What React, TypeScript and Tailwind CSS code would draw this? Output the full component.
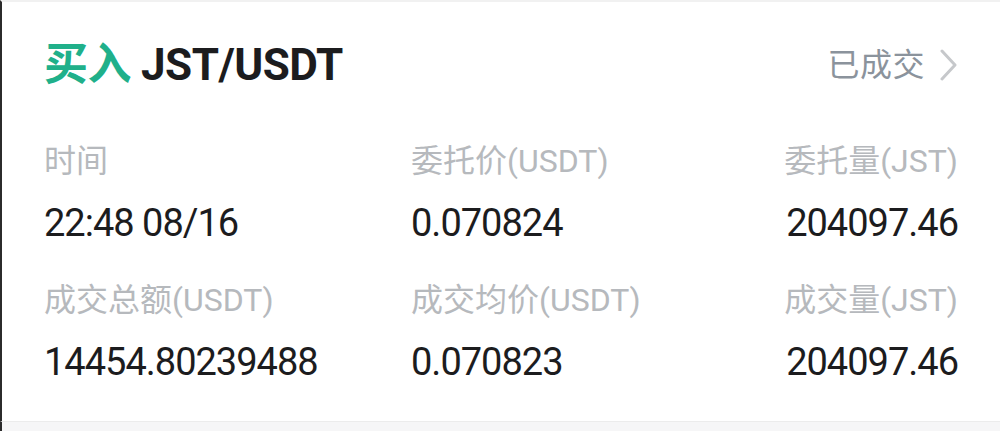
const labelFont = "font-['Roboto','Noto_Sans_CJK_SC',sans-serif]";

const cells = [
  { label: '时间', value: '22:48 08/16', align: 'left' },
  { label: '委托价(USDT)', value: '0.070824', align: 'left' },
  { label: '委托量(JST)', value: '204097.46', align: 'right' },
  { label: '成交总额(USDT)', value: '14454.80239488', align: 'left' },
  { label: '成交均价(USDT)', value: '0.070823', align: 'left' },
  { label: '成交量(JST)', value: '204097.46', align: 'right' },
];

export default function App() {
  return (
    <div className={`flex h-[431px] w-full flex-col bg-white ${labelFont}`}>
      <div className="border-l-2 border-t-2 border-l-[#2b2b2b] border-t-[#f1f1f1] pl-[42px] pr-[42px] pt-[41px] pb-[37px]">
        {/* header */}
        <div className="flex h-[44px] items-center justify-between">
          <div className="flex items-center text-[44px] font-bold leading-[44px] tracking-[-0.5px]">
            <span className="text-[#20b08a]">买入</span>
            <span className="ml-[10px] text-[#1c1c1e]">JST/USDT</span>
          </div>
          <button className="flex items-center text-[32px] leading-[44px] tracking-[0.5px] text-[#8b939c]">
            已成交
            <svg width="18" height="32" viewBox="0 0 18 32" className="ml-[15px]">
              <polyline points="2,2 15,16 2,30" fill="none" stroke="#c6c8cb" strokeWidth="3" strokeLinecap="round" strokeLinejoin="round" />
            </svg>
          </button>
        </div>

        {/* order details */}
        <div className="mt-[54px] grid grid-cols-[367px_1fr_auto] gap-y-[35px]">
          {cells.map((c, i) => (
            <div key={i} className={c.align === 'right' ? 'text-right' : 'text-left'}>
              <div className="h-10 text-[32px] leading-10 text-[#b6b9bd]">{c.label}</div>
              <div className="mt-5 h-11 text-[38px] font-normal leading-[44px] tracking-[-1px] text-[#1c1c1e]">
                {c.value}
              </div>
            </div>
          ))}
        </div>
      </div>
      <div className="flex-1 border-l-2 border-t border-l-[#2b2b2b] border-t-[#ececec] bg-[#f6f6f7]" />
    </div>
  );
}
